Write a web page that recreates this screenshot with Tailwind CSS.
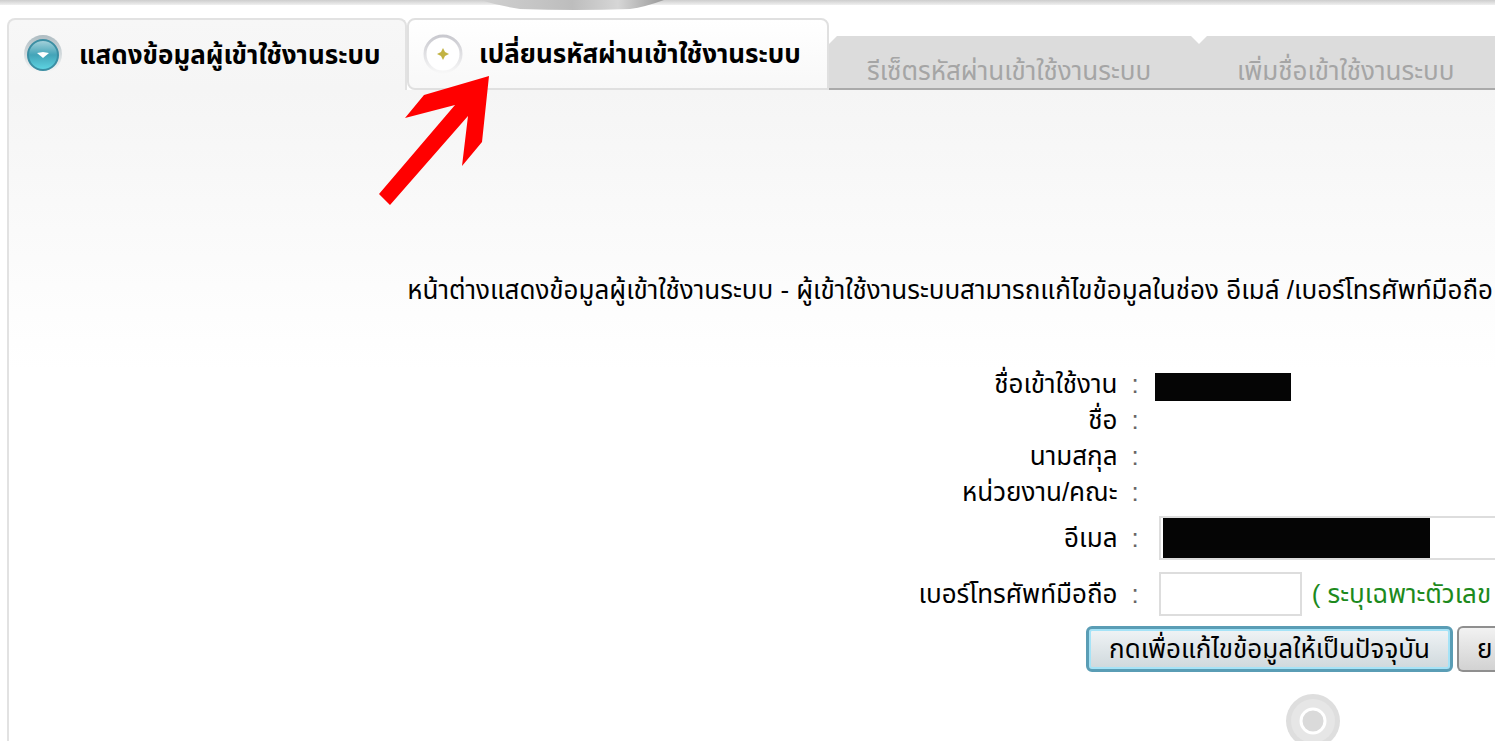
<!DOCTYPE html>
<html lang="th">
<head>
  <meta charset="UTF-8" />
  <title>ข้อมูลผู้เข้าใช้งานระบบ</title>
  <script src="https://cdn.jsdelivr.net/npm/@tailwindcss/browser@4"></script>
</head>
<body class="bg-white font-['Liberation_Sans','Noto_Sans_Thai',sans-serif] text-black overflow-hidden">
  <div class="mr-[5px] min-h-screen overflow-hidden whitespace-nowrap flex flex-col">

    <!-- bottom edge of the banner -->
    <header class="relative h-[18px] shrink-0">
      <div class="h-[5px] bg-linear-to-b from-[#cdcdcd] to-[#f0f0f0]"></div>
      <svg class="absolute top-0 left-[480px]" width="190" height="12" viewBox="0 0 190 12">
        <defs>
          <linearGradient id="knob" x1="0" x2="1">
            <stop offset="0" stop-color="#d0d0d0" />
            <stop offset=".5" stop-color="#bdbdbd" />
            <stop offset=".75" stop-color="#d6d6d6" />
            <stop offset="1" stop-color="#999" />
          </linearGradient>
        </defs>
        <path d="M0 0H184Q165 7 150 9Q95 11 40 9Q20 6 0 0Z" fill="url(#knob)" />
      </svg>
    </header>

    <main class="ml-[7px] grow flex flex-col">
      <nav class="relative z-10 flex items-end h-[72px]">
        <a href="#" class="h-[72px] w-[400px] shrink-0 flex items-center gap-4 pl-[14px] rounded-t-lg border-2 border-b-0 border-[#e2e2e2] bg-linear-to-b from-[#f7f7f7] to-[#f5f5f5] text-[26px] font-bold">
          <svg class="shrink-0" width="40" height="40" viewBox="0 0 40 40">
            <defs>
              <linearGradient id="rim" x1="0" y1="0" x2="0" y2="1">
                <stop offset="0" stop-color="#aebcc2" />
                <stop offset="1" stop-color="#f7f7f7" />
              </linearGradient>
              <linearGradient id="teal" x1="0" y1="0" x2="0" y2="1">
                <stop offset="0" stop-color="#a9d3dc" />
                <stop offset=".5" stop-color="#43a4b8" />
                <stop offset="1" stop-color="#5fd6e4" />
              </linearGradient>
            </defs>
            <circle cx="20" cy="19" r="19" fill="url(#rim)" />
            <circle cx="20" cy="20" r="15" fill="url(#teal)" stroke="#3b8ea3" stroke-width="2" />
            <path d="M14 18L20 17L26 18L20 23Z" fill="#fff" />
          </svg>
          แสดงข้อมูลผู้เข้าใช้งานระบบ
        </a>
        <a href="#" class="h-[72px] w-[422px] shrink-0 flex items-center gap-4 pl-[14px] rounded-lg rounded-br-none border-2 border-[#e0e0e0] bg-linear-to-b from-white to-[#f8f8f8] text-[26px] font-bold">
          <svg class="shrink-0" width="40" height="40" viewBox="0 0 40 40">
            <defs>
              <linearGradient id="ring" x1="0" y1="0" x2="0" y2="1">
                <stop offset="0" stop-color="#c9c9cf" />
                <stop offset="1" stop-color="#f7f7f7" />
              </linearGradient>
            </defs>
            <circle cx="20" cy="20" r="18" fill="#fff" stroke="url(#ring)" stroke-width="3" />
            <path d="M20 14L22 18L26 20L22 22L20 26L18 22L14 20L18 18Z" fill="#c2b343" />
          </svg>
          เปลี่ยนรหัสผ่านเข้าใช้งานระบบ
        </a>
        <a href="#" class="h-[54px] w-[370px] shrink-0 flex items-end pl-[38px] bg-[#dcdcdc] border-b-2 border-[#aaa] text-[26px] leading-[34px] text-[#a5a5a5] [clip-path:polygon(0_8px,8px_0,calc(100%-8px)_0,100%_8px,100%_100%,0_100%)]">รีเซ็ตรหัสผ่านเข้าใช้งานระบบ</a>
        <a href="#" class="h-[54px] grow flex items-end pl-[38px] bg-[#dcdcdc] border-b-2 border-[#aaa] text-[26px] leading-[34px] text-[#a5a5a5] [clip-path:polygon(0_8px,8px_0,100%_0,100%_100%,0_100%)]">เพิ่มชื่อเข้าใช้งานระบบ</a>

        <!-- pointer to the password tab -->
        <svg class="absolute top-[56px] left-[368px]" width="120" height="134" viewBox="0 0 120 134">
          <path d="M114 2L107 68L87 92L93 42L15 131L4 120L80 31L30 44L49 21Z" fill="#f00" />
        </svg>
      </nav>

      <section class="grow border-l-2 border-[#e2e2e2] bg-[linear-gradient(#f5f5f5,#fff_280px)] pt-[182px]">
        <p class="text-right text-[26px] leading-[36px] pr-[2px]">หน้าต่างแสดงข้อมูลผู้เข้าใช้งานระบบ - ผู้เข้าใช้งานระบบสามารถแก้ไขข้อมูลในช่อง อีเมล์ /เบอร์โทรศัพท์มือถือ</p>

        <form class="mt-[58px] text-[26px] leading-[36px]">
          <div class="grid grid-cols-[minmax(0,3fr)_minmax(0,1fr)]">
            <div class="h-9 pr-[6px] text-right">ชื่อเข้าใช้งาน</div>
            <div class="h-9 pl-2 flex gap-4"><span class="text-[#666]">:</span><span class="mt-[7px] h-7 w-[136px] bg-[#050505]"></span></div>
            <div class="h-9 pr-[6px] text-right">ชื่อ</div>
            <div class="h-9 pl-2 text-[#666]">:</div>
            <div class="h-9 pr-[6px] text-right">นามสกุล</div>
            <div class="h-9 pl-2 text-[#666]">:</div>
            <div class="h-9 pr-[6px] text-right">หน่วยงาน/คณะ</div>
            <div class="h-9 pl-2 text-[#666]">:</div>
            <label for="email" class="pr-[6px] text-right leading-[56px]">อีเมล</label>
            <div class="h-14 pl-2 flex items-center gap-5">
              <span class="text-[#666]">:</span>
              <span class="relative shrink-0">
                <input id="email" type="text" class="block h-11 w-[420px] border-2 border-[#ddd] bg-white" />
                <span class="absolute left-1 top-[2px] h-10 w-[267px] bg-[#050505]"></span>
              </span>
            </div>
            <label for="phone" class="pr-[6px] text-right leading-[56px]">เบอร์โทรศัพท์มือถือ</label>
            <div class="h-14 pl-2 flex items-center">
              <span class="text-[#666]">:</span>
              <input id="phone" type="text" class="ml-5 h-11 w-[143px] shrink-0 border-2 border-[#ddd] bg-white" />
              <span class="ml-[10px] text-[#1d8a1d]">( ระบุเฉพาะตัวเลข</span>
            </div>
          </div>
          <div class="flex justify-end gap-1 mt-1">
            <button type="button" class="h-[46px] w-[367px] shrink-0 rounded-md border-3 border-[#5a9db5] bg-linear-to-b from-[#f0f4f6] to-[#cfd8dc] inset-ring-2 inset-ring-[#a5e3f7]">กดเพื่อแก้ไขข้อมูลให้เป็นปัจจุบัน</button>
            <button type="button" class="h-[46px] w-[38px] shrink-0 overflow-hidden rounded-l-md border-2 border-r-0 border-[#8f8f8f] bg-linear-to-b from-[#f2f2f2] to-[#d2d2d2] pl-[18px] text-left">ย</button>
          </div>
        </form>

        <!-- the badge may run past the bottom of the window -->
        <div class="flex justify-end pr-[155px] mt-[22px]">
          <svg width="54" height="54" viewBox="0 0 54 54">
            <circle cx="27" cy="27" r="27" fill="#dedede" />
            <circle cx="27" cy="27" r="22" fill="#e6e6e6" />
            <circle cx="27" cy="27" r="12" fill="#dadada" stroke="#fff" stroke-width="3" />
          </svg>
        </div>
      </section>
    </main>
  </div>
</body>
</html>
